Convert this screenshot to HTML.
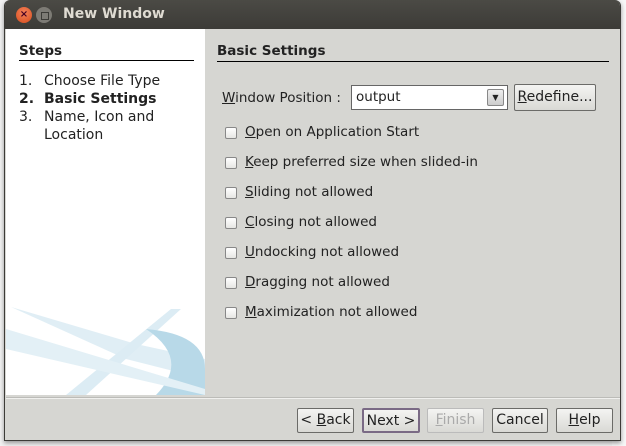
<!DOCTYPE html>
<html><head><style>
*{margin:0;padding:0;box-sizing:border-box}
body{width:626px;height:446px;overflow:hidden;background:#f2f2f2;font-family:"DejaVu Sans","Liberation Sans",sans-serif;font-size:13.5px;color:#222;position:relative}
.bg{position:absolute;left:612px;top:0;width:14px;height:446px;background:#f7f7f7}
.win{position:absolute;left:4px;top:0;width:617px;height:441px;background:#d6d6d2;border:1px solid #3c3b37;border-top:none;border-radius:6px 6px 0 0;overflow:hidden;box-shadow:0 2px 5px rgba(0,0,0,.4)}
.title{height:29px;background:linear-gradient(#4b4a45,#3c3b37);color:#dfdbd2;font-weight:bold;font-size:14px;line-height:29px;padding-left:58px}
.cl{position:absolute;left:11px;top:7px;width:16px;height:16px;border-radius:50%;background:radial-gradient(circle at 50% 35%,#f4815a,#d64d1c);color:#402;font-size:10px;text-align:center;line-height:16px;font-weight:bold}
.mn{position:absolute;left:31px;top:7px;width:16px;height:16px;border-radius:50%;background:#7d7b75}
.mn:after{content:"";position:absolute;left:5px;top:5px;width:6px;height:6px;border:1px solid #3c3b37}
.left{position:absolute;left:1px;top:29px;width:199px;height:366px;background:#fff;overflow:hidden}
.steps{position:absolute;left:13px;top:14px;width:175px;font-weight:bold;border-bottom:1px solid #000;padding-bottom:1px}
.ol{position:absolute;left:13px;top:43px;line-height:18px;font-size:14px}
.ol div{padding-left:25px;text-indent:-25px}
.ol span{display:inline-block;width:25px;text-indent:0}
.hd{position:absolute;left:212px;top:43px;width:392px;font-weight:bold;border-bottom:1px solid #000;padding-bottom:2px}
u{text-decoration:underline}
.lbl{position:absolute;left:217px;top:90px}
.combo{position:absolute;left:346px;top:85px;width:157px;height:25px;background:#fff;border:1px solid #666;padding:3px 0 0 4px}
.arr{position:absolute;right:3px;top:3px;width:17px;height:17px;border:1px solid #888;border-radius:2px;background:linear-gradient(#eee,#ccc);font-size:8px;text-align:center;line-height:16px}
.btn{position:absolute;height:25px;border:1px solid #6b6b68;border-radius:2px;background:linear-gradient(#f4f4f2,#d9d9d5);text-align:center;line-height:22px;font-size:14px}
.cb{position:absolute;left:220px}
.cb i{position:absolute;left:0;top:3px;width:12px;height:12px;border:1px solid #888;border-radius:2px;background:linear-gradient(#fff,#e6e6e3)}
.cb b{font-weight:normal;position:absolute;left:20px;top:0;white-space:nowrap}
.sep{position:absolute;left:1px;top:397px;width:614px;height:2px;border-top:1px solid #bcbcb8;border-bottom:1px solid #f0f0ee}
</style></head><body>
<div class="bg"></div>
<div class="win">
<div class="title">New Window</div>
<div class="cl">×</div><div class="mn"></div>
<div class="left">
<div class="steps">Steps</div>
<div class="ol">
<div><span>1.</span>Choose File Type</div>
<div style="font-weight:bold"><span>2.</span>Basic Settings</div>
<div><span>3.</span>Name, Icon and Location</div>
</div>
<svg style="position:absolute;left:0;top:260px" width="199" height="106" viewBox="0 0 199 106">
<path d="M5 18 L120 70 L199 90 L199 70 L130 55 Z" fill="#d8eaf3" opacity=".8"/>
<path d="M60 106 L165 20 L175 20 L80 106 Z" fill="#dcecf4"/>
<path d="M140 40 Q199 45 199 80 L199 106 L150 106 Q185 70 140 40Z" fill="#b8d9e8"/>
<path d="M0 40 L199 100 L199 106 L0 60Z" fill="#e3f0f6"/>
</svg>
</div>
<div class="hd">Basic Settings</div>
<div class="lbl"><u>W</u>indow Position :</div>
<div class="combo">output<div class="arr">▼</div></div>
<div class="btn" style="left:509px;top:84px;width:82px;height:27px;line-height:24px"><u>R</u>edefine...</div>
<div class="cb" style="top:124px"><i></i><b><u>O</u>pen on Application Start</b></div>
<div class="cb" style="top:154px"><i></i><b><u>K</u>eep preferred size when slided-in</b></div>
<div class="cb" style="top:184px"><i></i><b><u>S</u>liding not allowed</b></div>
<div class="cb" style="top:214px"><i></i><b><u>C</u>losing not allowed</b></div>
<div class="cb" style="top:244px"><i></i><b><u>U</u>ndocking not allowed</b></div>
<div class="cb" style="top:274px"><i></i><b><u>D</u>ragging not allowed</b></div>
<div class="cb" style="top:304px"><i></i><b><u>M</u>aximization not allowed</b></div>
<div class="sep"></div>
<div class="btn" style="left:292px;top:408px;width:57px">&lt; <u>B</u>ack</div>
<div class="btn" style="left:357px;top:408px;width:58px;border:2px solid #7a6a85">Next &gt;</div>
<div class="btn" style="left:422px;top:408px;width:57px;color:#aaa;border-color:#bbb"><u>F</u>inish</div>
<div class="btn" style="left:487px;top:408px;width:56px">Cancel</div>
<div class="btn" style="left:551px;top:408px;width:57px"><u>H</u>elp</div>
</div>
</body></html>
